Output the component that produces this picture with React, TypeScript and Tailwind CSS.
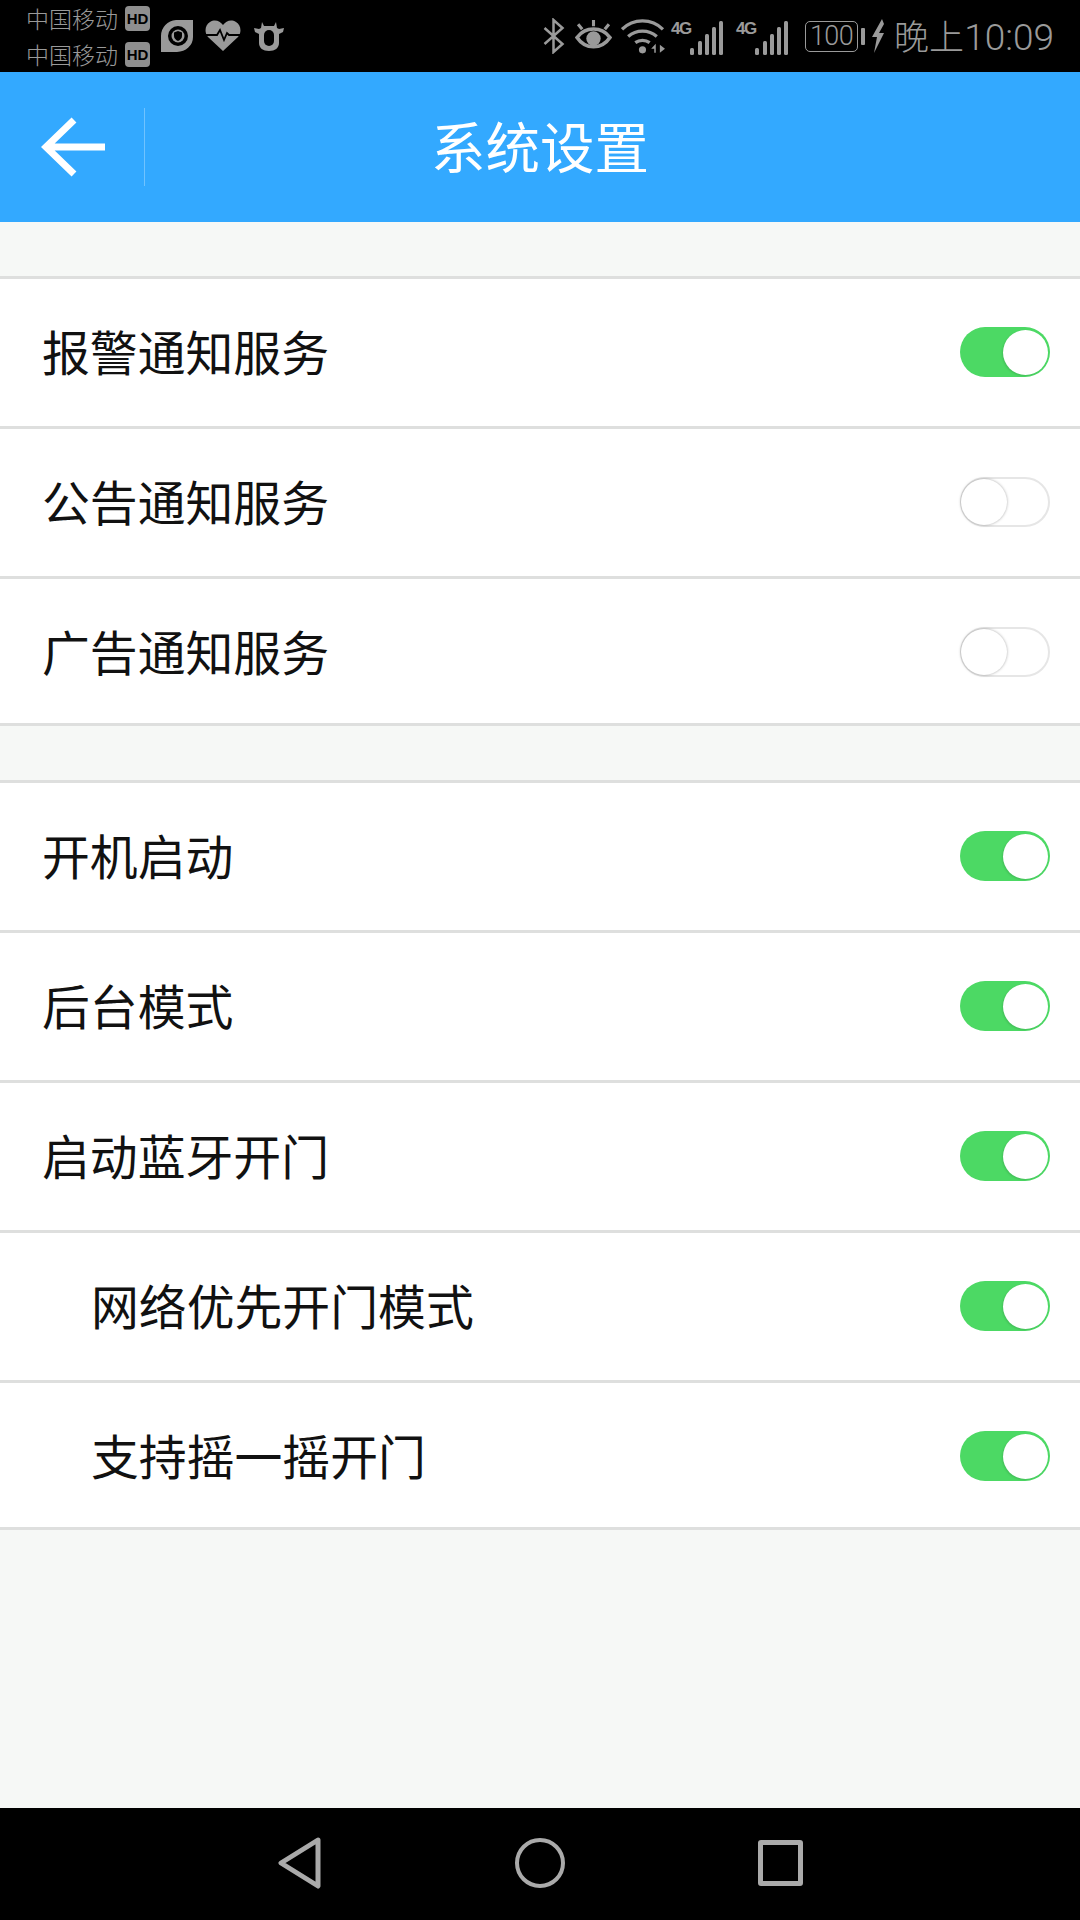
import { useState } from "react";

const FONT = "font-['Noto_Sans_CJK_SC','Noto_Sans',sans-serif]";

function Toggle({ on }: { on: boolean }) {
  if (on) {
    return (
      <div className="flex h-[50px] w-[90px] shrink-0 items-center justify-end rounded-full bg-[#4cd964] pr-[2px]">
        <div className="h-[45px] w-[45px] rounded-full bg-white shadow-[-1px_1px_2px_rgba(0,0,0,0.12)]" />
      </div>
    );
  }
  return (
    <div className="flex h-[50px] w-[90px] shrink-0 items-center justify-start rounded-full border-[2px] border-[#e6e6e6] bg-white">
      <div className="-ml-[1px] h-[46px] w-[46px] rounded-full bg-white shadow-[0_0_3px_rgba(0,0,0,0.35)]" />
    </div>
  );
}

function Row({ label, on, indent, last }: { label: string; on: boolean; indent?: boolean; last?: boolean }) {
  return (
    <div
      className={`border-b-[3px] border-[#dedfde] bg-white pt-[48px] pr-[30px] ${last ? "h-[147px]" : "h-[150px]"} ${
        indent ? "pl-[91px]" : "pl-[42px]"
      }`}
    >
      <div className="flex h-[50px] items-center justify-between">
        <span className="-mt-[3px] text-[47.85px] leading-none font-normal text-[#111]">{label}</span>
        <Toggle on={on} />
      </div>
    </div>
  );
}

function Signal() {
  return (
    <svg width="34" height="34" viewBox="0 0 34 34">
      <g fill="#9a9a9a">
        <rect x="0" y="27" width="4" height="7" rx="1.500" />
        <rect x="8" y="20" width="4" height="14" rx="1.500" />
        <rect x="15" y="13" width="4" height="21" rx="1.500" />
        <rect x="22" y="6" width="4" height="28" rx="1.500" />
        <rect x="29" y="0" width="4" height="34" rx="1.500" />
      </g>
    </svg>
  );
}

function NetworkBars() {
  return (
    <div className="mt-[4px] flex items-start">
      <span className="w-[19px] font-['Liberation_Sans',sans-serif] text-[17px] leading-[15px] font-bold tracking-[-1.500px] text-[#9a9a9a]">
        4G
      </span>
      <Signal />
    </div>
  );
}

function Carrier() {
  return (
    <div className="flex h-[36px] items-center">
      <span className="w-[125px] pl-[26px] text-[23px] leading-none font-light whitespace-nowrap text-[#9a9a9a]">中国移动</span>
      <span className="flex h-[25px] w-[25px] items-center justify-center rounded-[4px] bg-[#8f8f8f] font-['Liberation_Sans',sans-serif] text-[15px] leading-none font-bold text-black">
        HD
      </span>
    </div>
  );
}

function StatusBar() {
  return (
    <div className="flex h-[72px] items-center justify-between bg-black pr-[26px]">
      <div className="flex items-center">
        <div className="flex w-[150px] flex-col">
          <Carrier />
          <Carrier />
        </div>
        <svg width="34" height="34" viewBox="0 0 34 34" className="ml-[10px]">
          <path d="M16 1H33V18A16 15 0 0 1 17 33H1V17A16 16 0 0 1 16 1Z" fill="#9a9a9a" />
          <circle cx="18" cy="17" r="10" fill="#000" />
          <circle cx="18" cy="17" r="6.500" fill="#9a9a9a" />
          <path d="M18 12l4 1.500v3.500c0 2.500-2 4-4 5-2-1-4-2.500-4-5v-3.500z" fill="#000" />
        </svg>
        <svg width="36" height="32" viewBox="0 0 36 32" className="ml-[11px]">
          <path d="M18 31L3 17C-1 12 0 5 5 2c5-3 10-1 13 3 3-4 8-6 13-3 5 3 6 10 2 15Z" fill="#9a9a9a" />
          <path d="M1 15h11l3-5 4 10 3-7 2 2h11" fill="none" stroke="#000" strokeWidth="1.800" />
        </svg>
        <svg width="32" height="32" viewBox="0 0 32 32" className="ml-[12px]">
          <path d="M1 8l5 1 2-1 1-6 2 4h10l2-4 1 6 2 1 5-1-1 4-4 2v9c0 5-4 8-10 8S6 28 6 23v-9l-4-2Z" fill="#9a9a9a" />
          <rect x="11" y="10" width="10" height="16" rx="5" fill="#000" />
        </svg>
      </div>
      <div className="flex items-center">
        <svg width="23" height="36" viewBox="0 0 22 36">
          <path d="M2 10l18 16-9 8V2l9 8L2 26" fill="none" stroke="#9a9a9a" strokeWidth="2.500" />
        </svg>
        <svg width="37" height="33" viewBox="0 0 36 32" className="ml-[10px]">
          <path d="M2 17c8-11 24-11 32 0-8 12-24 12-32 0Z" fill="none" stroke="#9a9a9a" strokeWidth="3.500" />
          <circle cx="18" cy="18" r="7" fill="#9a9a9a" />
          <path d="M7 9L3 4M18 6V0M29 9l4-5" stroke="#9a9a9a" strokeWidth="3" />
        </svg>
        <svg width="45" height="35" viewBox="0 0 44 34" className="ml-[9px]">
          <g fill="none" stroke="#9a9a9a" strokeWidth="3.200">
            <path d="M1 10c11-11 29-11 40 0" />
            <path d="M7 17c8-7 20-7 28 0" />
            <path d="M14 23c4-3 10-3 14 0" />
          </g>
          <circle cx="21" cy="30" r="3.500" fill="#9a9a9a" />
          <path d="M34 24v9h-1.500v-4h-3zM38 25l5 4-5 4z" fill="#9a9a9a" />
        </svg>
        <div className="ml-[5px]">
          <NetworkBars />
        </div>
        <div className="ml-[12px]">
          <NetworkBars />
        </div>
        <div className="ml-[16px] flex h-[31px] w-[53px] items-center justify-center rounded-[5px] border-[1.500px] border-[#9a9a9a] font-['Roboto',sans-serif] text-[27px] leading-none font-light tracking-[-0.500px] text-[#9a9a9a]">
          100
        </div>
        <div className="ml-[3px] h-[17px] w-[4px] rounded-[1px] bg-[#9a9a9a]" />
        <svg width="14" height="34" viewBox="0 0 14 34" className="ml-[6px]">
          <path d="M11 0L1 18h5L3 34 13 14H8l5-9z" fill="#9a9a9a" />
        </svg>
        <span className="ml-[9px] text-[35px] leading-none font-light whitespace-nowrap text-[#9a9a9a]">
          晚上<span className="font-['Roboto',sans-serif] text-[37px]">10:09</span>
        </span>
      </div>
    </div>
  );
}

function Header() {
  return (
    <div className="relative flex h-[150px] items-center justify-center bg-[#33a9ff]">
      <div className="absolute top-0 left-0 flex h-full items-center">
        <div className="flex h-[78px] w-[145px] items-center border-r border-white/30 pl-[41px]">
          <svg width="66" height="62" viewBox="0 0 66 62">
            <path d="M64 31H6M33 4L5 31l28 27" fill="none" stroke="#fff" strokeWidth="7" />
          </svg>
        </div>
      </div>
      <span className="-mt-[3px] text-[54.5px] leading-none font-normal text-white">系统设置</span>
    </div>
  );
}

function NavBar() {
  return (
    <div className="flex h-[112px] items-center bg-black pb-[2px] pl-[278px]">
      <svg width="44" height="52" viewBox="0 0 44 52">
        <path d="M40 3L3 26 40 49Z" fill="none" stroke="#aaa" strokeWidth="5" strokeLinejoin="round" />
      </svg>
      <div className="ml-[193px] h-[50px] w-[50px] rounded-full border-[4px] border-[#aaa]" />
      <div className="ml-[193px] h-[46px] w-[45px] rounded-[3px] border-[5px] border-[#aaa]" />
    </div>
  );
}

export default function App() {
  const [groupA] = useState([
    { label: "报警通知服务", on: true },
    { label: "公告通知服务", on: false },
    { label: "广告通知服务", on: false, last: true },
  ]);
  const [groupB] = useState([
    { label: "开机启动", on: true },
    { label: "后台模式", on: true },
    { label: "启动蓝牙开门", on: true },
    { label: "网络优先开门模式", on: true, indent: true },
    { label: "支持摇一摇开门", on: true, indent: true, last: true },
  ]);

  return (
    <div className={`flex h-[1920px] w-[1080px] flex-col overflow-hidden bg-[#f6f8f6] ${FONT}`}>
      <StatusBar />
      <Header />
      <div className="flex-1 pt-[54px]">
        <div className="border-t-[3px] border-[#dedfde]">
          {groupA.map((row) => (
            <Row key={row.label} {...row} />
          ))}
        </div>
        <div className="mt-[54px] border-t-[3px] border-[#dedfde]">
          {groupB.map((row) => (
            <Row key={row.label} {...row} />
          ))}
        </div>
      </div>
      <NavBar />
    </div>
  );
}
